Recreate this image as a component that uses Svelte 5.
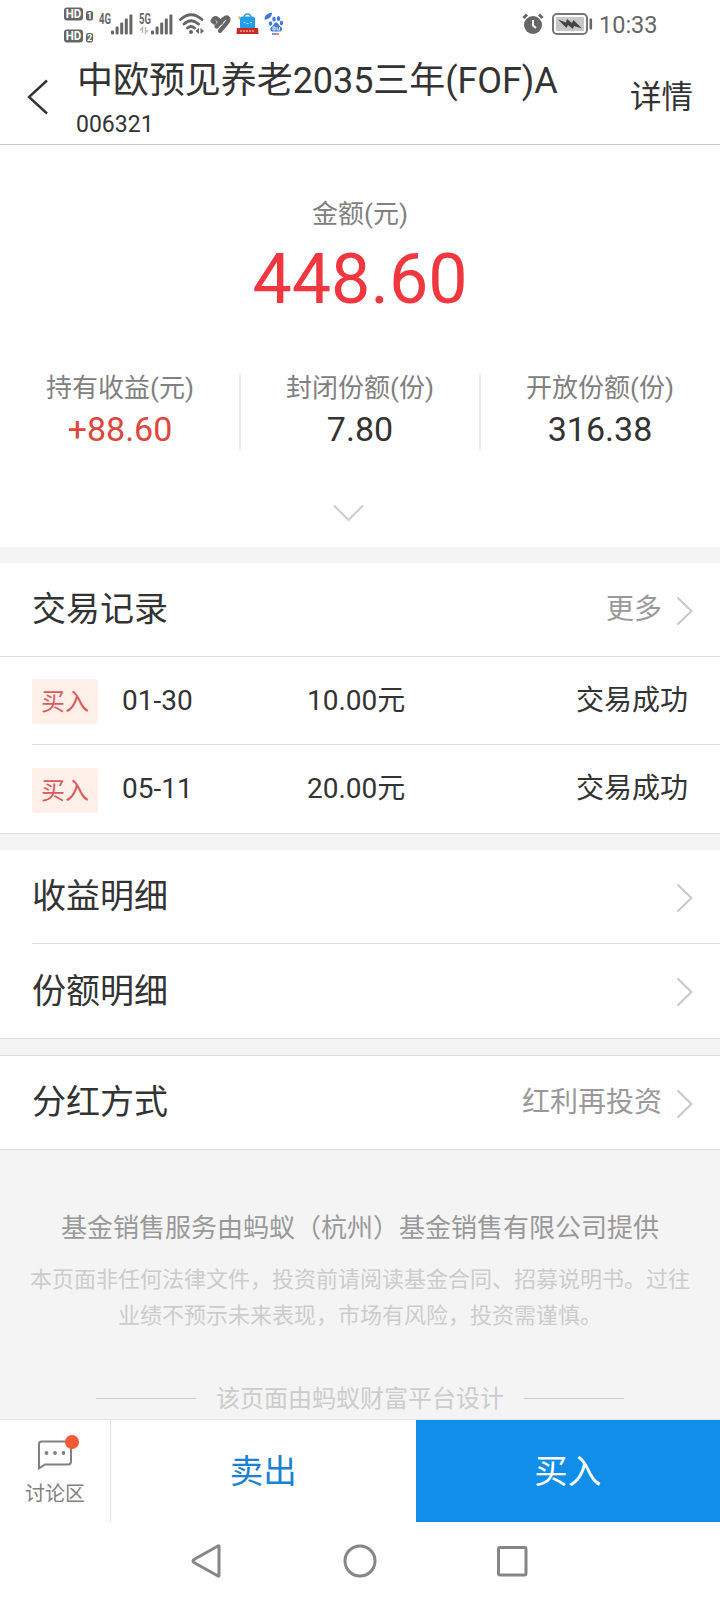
<script>
  const fund = { name: "中欧预见养老2035三年(FOF)A", code: "006321" };

  const stats = [
    { label: "持有收益(元)", value: "+88.60", up: true },
    { label: "封闭份额(份)", value: "7.80" },
    { label: "开放份额(份)", value: "316.38" },
  ];

  const records = [
    { type: "买入", date: "01-30", amount: "10.00元", status: "交易成功" },
    { type: "买入", date: "05-11", amount: "20.00元", status: "交易成功" },
  ];

  const bars = [4, 8, 12, 16, 20];
</script>

{#snippet arrow()}
  <svg class="arrow" width="18" height="30" viewBox="0 0 18 30">
    <path d="M1.5 1.5 L15.5 15 L1.5 28.5" />
  </svg>
{/snippet}

{#snippet signal(label, idle)}
  <svg class="signal" width="34" height="24" viewBox="0 0 34 24">
    <text x="0" y="11.5" textLength="12" lengthAdjust="spacingAndGlyphs">{label}</text>
    {#if idle}
      <path class="idle" d="M3.5 21V15.5L1 18.5M6.500 15v6l2.500-3" />
    {/if}
    {#each bars as h, i}
      <rect x={12 + i * 4.6} y={22.5 - h} width="3" height={h} rx="1" />
    {/each}
  </svg>
{/snippet}

<div class="page">
  <div class="status">
    <svg class="hd" width="30" height="36" viewBox="0 0 30 36">
      <rect x="0" y="0.5" width="19" height="13" rx="3" />
      <rect x="0" y="22.5" width="19" height="13" rx="3" />
      <rect x="22" y="4" width="7" height="9.5" rx="2" />
      <rect x="22" y="26" width="7" height="9.5" rx="2" />
      <text x="1.800" y="11.3" textLength="15.500" lengthAdjust="spacingAndGlyphs">HD</text>
      <text x="1.800" y="33.3" textLength="15.500" lengthAdjust="spacingAndGlyphs">HD</text>
      <text class="sim" x="23" y="12.2">1</text>
      <text class="sim" x="23" y="34.2">2</text>
    </svg>
    {@render signal("4G", false)}
    {@render signal("5G", true)}
    <svg class="wifi" width="26" height="24" viewBox="0 0 26 24">
      <path d="M1.5 7.5Q12 -2 23 7.5M5 12Q12 5.5 19.5 12M8.5 16Q12 13 15.5 16" />
      <circle cx="12" cy="20" r="2" />
      <path class="tri" d="M20 16v6l-3.500-3zM21.500 16v6l3.500-3z" />
    </svg>
    <svg class="health" width="22" height="20" viewBox="0 0 22 20">
      <path d="M3.500 7Q5.500 2.500 8.500 5L12 8.500M3.500 7L5.500 8.500" />
      <path d="M7.500 12.500L14.500 5Q18 2 19.300 4.500Q19.800 7 17.500 9.300L11 16.800" />
    </svg>
    <svg class="shop" width="24" height="22" viewBox="0 0 24 22">
      <path d="M8 5Q8 1 11.500 1T15 5" fill="none" stroke="#3b9de0" stroke-width="1.500" />
      <path d="M2 3l3 1-2 3z" fill="#e8b65b" />
      <rect x="4" y="3.500" width="15" height="13" rx="2.500" fill="#249ee9" />
      <path d="M7.500 9.500h2M14 9.500h2M10.500 10.500h2" stroke="#a8dcff" stroke-width="1" />
      <path d="M1 15L22 15 22.500 21H0.500z" fill="#c92b22" />
      <path d="M4 18h15" stroke="#eda090" stroke-width="1.500" stroke-dasharray="2 1" />
    </svg>
    <svg class="paw" width="22" height="24" viewBox="0 0 22 24">
      <g fill="#4379d6">
        <path d="M0.500 7.500Q0 2 8 0.500Q8 6 2 7.500z" />
        <ellipse cx="10" cy="7" rx="1.700" ry="2.500" />
        <ellipse cx="14.500" cy="6.500" rx="1.700" ry="2.500" />
        <ellipse cx="6.500" cy="11.500" rx="1.700" ry="2.200" />
        <ellipse cx="17.500" cy="11" rx="1.700" ry="2.200" />
        <path d="M12 10.500C14 10.500 14.500 13 17 15S17.500 20 14.500 19.500H9.500C6.500 20 5 17 7.500 15S10 10.500 12 10.500z" />
      </g>
      <path d="M9 15h2v3h-2zM13 15v3h2.500v-3" fill="none" stroke="#fff" stroke-width="0.900" />
      <path d="M8 22h3.500" stroke="#4379d6" stroke-width="1.500" />
      <path d="M11 22h4" stroke="#e2585e" stroke-width="1.500" />
    </svg>
    <div class="status-right">
      <svg class="alarm" width="22" height="22" viewBox="0 0 22 22">
        <circle cx="11" cy="12" r="9" />
        <path class="bell" d="M1.500 5L5 1.500M20.500 5L17 1.500" />
        <path class="hand" d="M11 7v5.500l3 2.500" />
      </svg>
      <svg class="battery" width="42" height="22" viewBox="0 0 42 22">
        <rect class="shell" x="1" y="1" width="34" height="20" rx="4" />
        <rect class="fill" x="4" y="4" width="28" height="14" rx="1" />
        <path class="bolt" d="M6 6.500L14 9.500 15 6 20 10 21.500 7 30 15.500 22 13 21 16 16 12 14.500 15z" />
        <rect class="nub" x="37.500" y="5.500" width="2.600" height="11" rx="1" />
      </svg>
      <span>10:33</span>
    </div>
  </div>

  <header>
    <svg class="back" width="22" height="36" viewBox="0 0 22 36">
      <path d="M20 1.5L2 18L20 34.5" />
    </svg>
    <div class="heading">
      <h1>{fund.name}</h1>
      <div class="code">{fund.code}</div>
    </div>
    <div class="detail">详情</div>
  </header>

  <main>
    <section class="summary">
      <div class="label">金额(元)</div>
      <div class="total">448.60</div>
      <div class="stats">
        {#each stats as s}
          <div class="stat">
            <div class="label">{s.label}</div>
            <div class="value" class:up={s.up}>{s.value}</div>
          </div>
        {/each}
      </div>
      <svg class="expand" width="34" height="18" viewBox="0 0 34 18">
        <path d="M2 1.5L16.5 16L31 1.5" />
      </svg>
    </section>

    <section class="card">
      <div class="row line">
        <h2>交易记录</h2>
        <span class="more">更多</span>
        {@render arrow()}
      </div>
      {#each records as r}
        <div class="record">
          <span class="tag">{r.type}</span>
          <span class="date">{r.date}</span>
          <span class="amount">{r.amount}</span>
          <span class="state">{r.status}</span>
        </div>
      {/each}
    </section>

    <section class="card">
      <div class="row"><h2>收益明细</h2>{@render arrow()}</div>
      <div class="row inset"><h2>份额明细</h2>{@render arrow()}</div>
    </section>

    <section class="card top-line">
      <div class="row">
        <h2>分红方式</h2>
        <span class="more">红利再投资</span>
        {@render arrow()}
      </div>
    </section>

    <footer>
      <p class="provider">基金销售服务由蚂蚁（杭州）基金销售有限公司提供</p>
      <p class="notice">本页面非任何法律文件，投资前请阅读基金合同、招募说明书。过往<br />业绩不预示未来表现，市场有风险，投资需谨慎。</p>
      <div class="design"><span>该页面由蚂蚁财富平台设计</span></div>
    </footer>
  </main>

  <div class="actions">
    <div class="discuss">
      <svg width="44" height="38" viewBox="0 0 44 38">
        <path class="bubble" d="M4 9Q4 6.5 6.5 6.5H33Q36 6.5 36 9.5V26.5Q36 29.5 33 29.5H10L4 33.5z" />
        <g class="dots">
          <circle cx="11.5" cy="18" r="1.9" />
          <circle cx="20" cy="18" r="1.9" />
          <circle cx="28.5" cy="18" r="1.9" />
        </g>
        <circle class="dot" cx="37" cy="7" r="7" />
      </svg>
      <span>讨论区</span>
    </div>
    <div class="sell">卖出</div>
    <div class="buy">买入</div>
  </div>

  <nav>
    <svg width="32" height="34" viewBox="0 0 32 34">
      <path d="M28 2.5V31.5Q28 32.5 27 32L3 18.5Q1 17 3 15.5L27 2Q28 1.5 28 2.5z" />
    </svg>
    <svg width="34" height="34" viewBox="0 0 34 34"><circle cx="17" cy="17" r="15" /></svg>
    <svg width="32" height="34" viewBox="0 0 32 34"><rect x="1.5" y="3.500" width="27.500" height="27.500" rx="1.500" /></svg>
  </nav>
</div>

<style>
  :global(body) {
    margin: 0;
    background: #fff;
  }

  .page {
    display: flex;
    flex-direction: column;
    width: 720px;
    height: 1600px;
    overflow: hidden;
    background: #fff;
    color: #333;
    font-family: Roboto, "Noto Sans CJK SC", sans-serif;
  }

  h1,
  h2,
  p {
    margin: 0;
    font-weight: 400;
  }

  svg {
    flex: none;
    display: block;
  }

  /* status bar */
  .status {
    display: flex;
    align-items: center;
    flex: none;
    height: 48px;
    padding-left: 64px;
    box-sizing: border-box;
    fill: #666;
  }

  .hd {
    margin: 2px 5px 0 0;
  }

  .hd text {
    fill: #fff;
    font-size: 12px;
    font-weight: 700;
  }

  .hd .sim {
    font-size: 9px;
  }

  .signal {
    margin-right: 6px;
  }

  .signal text {
    font-size: 14px;
    font-weight: 700;
  }

  .idle {
    fill: none;
    stroke: #bbb;
    stroke-width: 1.5;
  }

  .wifi path {
    fill: none;
    stroke: #666;
    stroke-width: 2.8;
    stroke-linecap: round;
  }

  .wifi .tri {
    fill: #666;
    stroke: none;
  }

  .health {
    margin: 0 5px 0 4px;
    fill: none;
    stroke: #666;
    stroke-width: 4.2;
    stroke-linecap: round;
    stroke-linejoin: round;
  }

  .paw {
    margin-left: 4px;
  }

  .status-right {
    display: flex;
    align-items: center;
    margin-left: auto;
    padding-right: 63px;
    color: #666;
    font-size: 23.5px;
  }

  .status-right span {
    padding-top: 2px;
    width: 58px;
  }

  .alarm .bell {
    stroke: #666;
    stroke-width: 3;
  }

  .alarm .hand {
    fill: none;
    stroke: #fff;
    stroke-width: 2;
  }

  .battery {
    margin: 0 5px 0 8px;
  }

  .shell {
    fill: #fff;
    stroke: #777;
    stroke-width: 2;
  }

  .fill {
    fill: #c8c8c8;
  }

  .bolt {
    fill: #444;
  }

  /* title bar */
  header {
    display: flex;
    flex: none;
    height: 97px;
    box-sizing: border-box;
    border-bottom: 1px solid #c8c8c8;
  }

  .back {
    margin: 31px 0 0 27px;
    fill: none;
    stroke: #333;
    stroke-width: 2.4;
  }

  .heading {
    flex: 1;
    padding: 9px 0 0 28px;
  }

  h1 {
    font-size: 36px;
    line-height: 48px;
    letter-spacing: -0.06px;
    white-space: nowrap;
  }

  .code {
    margin-left: -1px;
    font-size: 23px;
    line-height: 40px;
  }

  .detail {
    margin-right: 27px;
    font-size: 31.5px;
    line-height: 100px;
  }

  main {
    flex: none;
    height: 1274px;
    overflow: hidden;
    background: #f4f4f4;
  }

  /* summary */
  .summary {
    height: 402px;
    padding-top: 50px;
    box-sizing: border-box;
    background: #fff;
    text-align: center;
  }

  .label {
    color: #808080;
    font-size: 26px;
    line-height: 38px;
  }

  .total {
    color: #f0363f;
    font-size: 70px;
    line-height: 92px;
  }

  .stats {
    display: flex;
    margin-top: 50px;
  }

  .stat {
    flex: 1;
    height: 74px;
  }

  .stat + .stat {
    box-shadow: -1px 0 0 #ececec, inset 1px 0 0 #ececec;
  }

  .stat .label {
    line-height: 26px;
  }

  .value {
    font-size: 34px;
    line-height: 56px;
  }

  .up {
    color: #dd473e;
  }

  .expand {
    margin: 55px 0 0 332px;
    fill: none;
    stroke: #ccc;
    stroke-width: 2;
  }

  /* list cards */
  .card {
    margin-top: 16px;
    border-bottom: 1px solid #ddd;
    background: #fff;
  }

  .top-line {
    border-top: 1px solid #ddd;
  }

  .row {
    display: flex;
    align-items: center;
    height: 93px;
    padding: 0 26px 0 32px;
  }

  .line {
    border-bottom: 1px solid #ddd;
  }

  .inset {
    height: 94px;
    margin-left: 32px;
    padding-left: 0;
    border-top: 1px solid #ddd;
  }

  h2 {
    flex: 1;
    font-size: 34px;
    line-height: 46px;
    margin-bottom: 2px;
  }

  .inset h2 {
    margin-bottom: 0;
  }

  .more {
    margin-right: 14px;
    color: #999;
    font-size: 28px;
    line-height: 38px;
  }

  .arrow {
    margin-top: 2px;
    fill: none;
    stroke: #c8c8c8;
    stroke-width: 2;
  }

  .record {
    display: flex;
    align-items: center;
    height: 87px;
    margin-left: 32px;
    padding-right: 32px;
    font-size: 28px;
    line-height: 40px;
  }

  .record + .record {
    height: 88px;
    border-top: 1px solid #ddd;
    line-height: 42px;
  }

  .record .tag {
    width: 66px;
    height: 45px;
    margin-top: 2px;
    border-radius: 2px;
    background: #ffefe9;
    color: #dc5a5c;
    font-size: 24px;
    line-height: 46px;
    text-align: center;
  }

  .date {
    width: 185px;
    margin-left: 24px;
  }

  .state {
    margin-left: auto;
  }

  /* footer */
  footer {
    padding-top: 59px;
    text-align: center;
  }

  .provider {
    color: #999;
    font-size: 26px;
    line-height: 38px;
  }

  .notice {
    margin-top: 15px;
    color: #ccc;
    font-size: 22px;
    line-height: 36px;
    white-space: nowrap;
  }

  .design {
    display: flex;
    align-items: center;
    justify-content: center;
    gap: 20px;
    margin-top: 45px;
    color: #ccc;
    font-size: 24px;
    line-height: 36px;
  }

  .design span {
    padding-top: 2px;
  }

  .design::before,
  .design::after {
    content: "";
    width: 100px;
    height: 1px;
    background: #ccc;
  }

  /* bottom actions */
  .actions {
    display: flex;
    flex: none;
    height: 103px;
    box-sizing: border-box;
    border-top: 1px solid #e5e5e5;
    font-size: 33.5px;
    line-height: 103px;
    text-align: center;
  }

  .discuss {
    display: flex;
    flex-direction: column;
    align-items: center;
    width: 111px;
    padding-top: 15px;
    border-right: 1px solid #e5e5e5;
    box-sizing: border-box;
    color: #808080;
    font-size: 20px;
    line-height: 30px;
  }

  .discuss svg {
    margin-left: 4px;
  }

  .discuss span {
    margin-top: 6px;
  }

  .bubble {
    fill: none;
    stroke: #808080;
    stroke-width: 2;
  }

  .dots {
    fill: #808080;
  }

  .dot {
    fill: #f55a33;
  }

  .sell {
    width: 304.5px;
    color: #1b82d2;
  }

  .buy {
    flex: 1;
    background: #108ee9;
    color: #fff;
  }

  nav {
    display: flex;
    align-items: center;
    justify-content: center;
    flex: 1;
    gap: 120px;
    fill: none;
    stroke: #868686;
    stroke-width: 3;
  }
</style>
